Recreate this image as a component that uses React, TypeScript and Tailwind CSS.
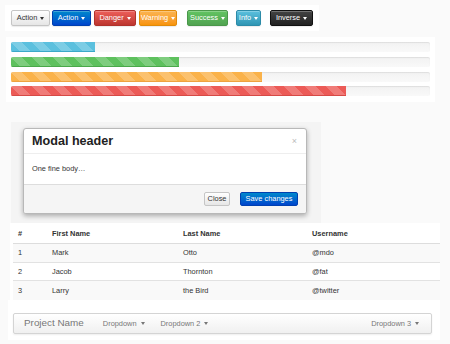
const font = { fontFamily: '"Liberation Sans", Arial, sans-serif' };

function Caret({ className = "" }: { className?: string }) {
  return (
    <span
      className={`inline-block w-0 h-0 ml-[3px] border-x-[2.5px] border-x-transparent border-t-[3px] border-t-current align-middle ${className}`}
    />
  );
}

const buttons = [
  { label: "Action", w: "w-[39px]", ml: "ml-0", cls: "from-white to-[#e6e6e6] text-[#333] border-[#c5c5c5]" },
  { label: "Action", w: "w-[39px]", ml: "ml-[2px]", cls: "from-[#0088cc] to-[#0044cc] text-white border-[#0040b0]" },
  { label: "Danger", w: "w-[42px]", ml: "ml-[3px]", cls: "from-[#ee5f5b] to-[#bd362f] text-white border-[#b0322c]" },
  { label: "Warning", w: "w-[38px]", ml: "ml-[3px]", cls: "from-[#fbb450] to-[#f89406] text-white border-[#e08a0a]" },
  { label: "Success", w: "w-[41px]", ml: "ml-[10px]", cls: "from-[#62c462] to-[#51a351] text-white border-[#4a974a]" },
  { label: "Info", w: "w-[25px]", ml: "ml-[8px]", cls: "from-[#5bc0de] to-[#2f96b4] text-white border-[#2c8ba8]" },
  { label: "Inverse", w: "w-[43px]", ml: "ml-[9px]", cls: "from-[#444] to-[#222] text-white border-[#111]" },
];

const bars = [
  { w: "w-[20%]", c: "bg-[#5bc0de] border-[#3ba9c9]" },
  { w: "w-[40%]", c: "bg-[#5ec15e] border-[#4aa84a]" },
  { w: "w-[60%]", c: "bg-[#fab24a] border-[#eea240]" },
  { w: "w-[80%]", c: "bg-[#ec5b57] border-[#d64a46]" },
];

const rows = [
  ["1", "Mark", "Otto", "@mdo"],
  ["2", "Jacob", "Thornton", "@fat"],
  ["3", "Larry", "the Bird", "@twitter"],
];

const cols = ["w-[34px]", "w-[131px]", "w-[129px]", "w-[126px]"];

export default function App() {
  return (
    <div className="w-[450px] h-[344px] bg-[#fafafa] flex flex-col overflow-hidden" style={font}>
      {/* buttons */}
      <div className="ml-[5px] mt-[5px] w-[314px] h-[26px] bg-white flex items-center pl-[6px]">
        {buttons.map((b, i) => (
          <div
            key={i}
            className={`${b.w} ${b.ml} h-[16px] rounded-[2px] border bg-linear-to-b ${b.cls} text-[7.4px] flex items-center justify-center shadow-[inset_0_1px_0_rgba(255,255,255,.25),0_1px_1px_rgba(0,0,0,.08)]`}
          >
            {b.label}
            <Caret />
          </div>
        ))}
      </div>

      {/* progress */}
      <div className="ml-[6px] mt-[6px] w-[429px] h-[65px] bg-white px-[5px] pt-[5px] flex flex-col gap-[4.8px]">
        {bars.map((b, i) => (
          <div
            key={i}
            className="h-[10px] rounded-[2px] bg-linear-to-b from-[#f2f2f2] to-[#f9f9f9] shadow-[inset_0_1px_1px_rgba(0,0,0,.08)] overflow-hidden"
          >
            <div
              className={`${b.w} h-full border-b ${b.c} bg-[linear-gradient(45deg,rgba(255,255,255,.2)_25%,transparent_25%,transparent_50%,rgba(255,255,255,.2)_50%,rgba(255,255,255,.2)_75%,transparent_75%,transparent)] bg-size-[21px_21px]`}
            />
          </div>
        ))}
      </div>

      {/* modal */}
      <div className="ml-[11px] mt-[20px] w-[310px] h-[101px] bg-[#f4f4f4] pl-[12px] pt-[6px]">
        <div className="w-[284px] h-[86px] bg-white rounded-[3px] border border-[#b8b8b8] shadow-[0_2px_5px_rgba(0,0,0,.3)] overflow-hidden flex flex-col">
          <div className="h-[25px] border-b border-[#eee] flex items-center justify-between pl-[8px] pr-[9px]">
            <span className="text-[12.6px] font-bold text-[#222]">Modal header</span>
            <span className="text-[9px] text-[#bbb] leading-none">×</span>
          </div>
          <div className="h-[30px] pl-[8px] flex items-center text-[7.4px] text-[#333]">One fine body…</div>
          <div className="flex-1 bg-[#f5f5f5] border-t border-[#ddd] flex items-center justify-end pr-[8px]">
            <div className="w-[26px] h-[14px] rounded-[2px] border border-[#c5c5c5] bg-linear-to-b from-white to-[#e6e6e6] text-[7.4px] text-[#333] flex items-center justify-center">
              Close
            </div>
            <div className="ml-[10px] w-[58px] h-[14px] rounded-[2px] border border-[#0040b0] bg-linear-to-b from-[#0088cc] to-[#0044cc] text-[7.4px] text-white flex items-center justify-center">
              Save changes
            </div>
          </div>
        </div>
      </div>

      {/* table */}
      <div className="ml-[10px] w-[430px] h-[77px] bg-white pl-[3px] pt-[1px] text-[7.4px] text-[#333]">
        <div className="flex h-[20px] items-center border-b border-[#ddd] font-bold">
          {["#", "First Name", "Last Name", "Username"].map((h, i) => (
            <div key={i} className={`${cols[i]} pl-[5px]`}>
              {h}
            </div>
          ))}
        </div>
        {rows.map((r, ri) => (
          <div
            key={ri}
            className={`flex h-[18.6px] items-center ${ri < 2 ? "border-b border-[#e2e2e2]" : ""} ${ri % 2 === 0 ? "bg-[#f9f9f9]" : "bg-white"}`}
          >
            {r.map((c, i) => (
              <div key={i} className={`${cols[i]} pl-[5px]`}>
                {c}
              </div>
            ))}
          </div>
        ))}
      </div>

      {/* navbar */}
      <div className="ml-[8px] w-[432px] h-[40px] bg-white pl-[5px] pt-[13px]">
        <div className="w-[419px] h-[21px] rounded-[2px] border border-[#d4d4d4] bg-linear-to-b from-white to-[#f0f0f0] shadow-[0_1px_2px_rgba(0,0,0,.07)] flex items-center text-[#777]">
          <span className="ml-[10px] text-[9.9px]">Project Name</span>
          <span className="ml-[19px] text-[7.4px] flex items-center">
            Dropdown
            <Caret className="ml-[4px]" />
          </span>
          <span className="ml-[16px] text-[7.4px] flex items-center">
            Dropdown 2
            <Caret className="ml-[4px]" />
          </span>
          <span className="ml-auto mr-[12px] text-[7.4px] flex items-center">
            Dropdown 3
            <Caret className="ml-[4px]" />
          </span>
        </div>
      </div>
    </div>
  );
}
